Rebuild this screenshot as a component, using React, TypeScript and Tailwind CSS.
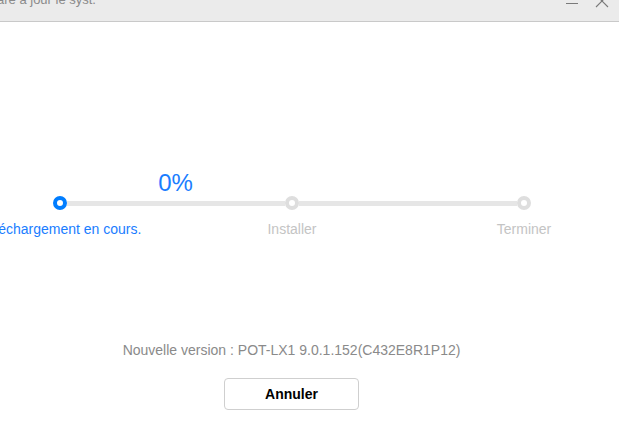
import React from 'react';

const font = { fontFamily: '"Liberation Sans", Arial, sans-serif' };

function Dot({ active }: { active?: boolean }) {
  return active ? (
    <span className="h-[14px] w-[14px] shrink-0 rounded-full border-[4px] border-[#007dff] bg-white" />
  ) : (
    <span className="h-[14px] w-[14px] shrink-0 rounded-full border-[4px] border-[#dedede] bg-white" />
  );
}

function Label({ text, active }: { text: string; active?: boolean }) {
  return (
    <div className="flex w-[14px] justify-center">
      <span
        className={
          'whitespace-nowrap text-[14px] leading-[16px] ' +
          (active ? 'text-[#1a7dff]' : 'text-[#c4c4c4]')
        }
      >
        {text}
      </span>
    </div>
  );
}

export default function App() {
  return (
    <div className="h-[437px] w-[619px] overflow-hidden bg-white" style={font}>
      {/* ── Title bar ─────────────────────────── */}
      <div className="flex h-[22px] items-start border-b border-[#c9c9c9] bg-[#ebebeb]">
        <span className="-ml-[3px] -mt-[8px] flex-1 whitespace-nowrap text-[13px] leading-[15px] text-[#8a8a8a]">
          are à jour le syst.
        </span>
        <svg width="14" height="2" viewBox="0 0 14 2" className="mr-[16px] mt-[3px]">
          <rect x="1" y="0" width="12" height="1" fill="#7a7a7a" />
        </svg>
        <svg width="14" height="14" viewBox="0 0 14 14" className="-mt-[6px] mr-[10px]">
          <path d="M1 1L13 13M13 1L1 13" stroke="#7a7a7a" strokeWidth="1.1" />
        </svg>
      </div>

      {/* ── Progress ──────────────────────────── */}
      <div className="w-[583px]">
        <div className="ml-[53px] mt-[148px] w-[245px] text-center text-[24px] leading-[26px] text-[#1a7dff]">
          0%
        </div>
        <div className="ml-[53px] flex w-[478px] items-center">
          <Dot active />
          <span className="h-[5px] flex-1 bg-[#e6e6e6]" />
          <Dot />
          <span className="h-[5px] flex-1 bg-[#e6e6e6]" />
          <Dot />
        </div>
        <div className="ml-[53px] mt-[11px] flex w-[478px] justify-between">
          <Label text="Téléchargement en cours." active />
          <Label text="Installer" />
          <Label text="Terminer" />
        </div>

        <div className="mt-[105px] flex flex-col items-center">
          <p className="text-[14px] leading-[16px] text-[#8a8a8a]">
            Nouvelle version : POT-LX1 9.0.1.152(C432E8R1P12)
          </p>
          <button className="mt-[20px] h-[32px] w-[135px] rounded-[4px] border border-[#cfcfcf] bg-white text-[14px] font-bold text-black">
            Annuler
          </button>
        </div>
      </div>
    </div>
  );
}
